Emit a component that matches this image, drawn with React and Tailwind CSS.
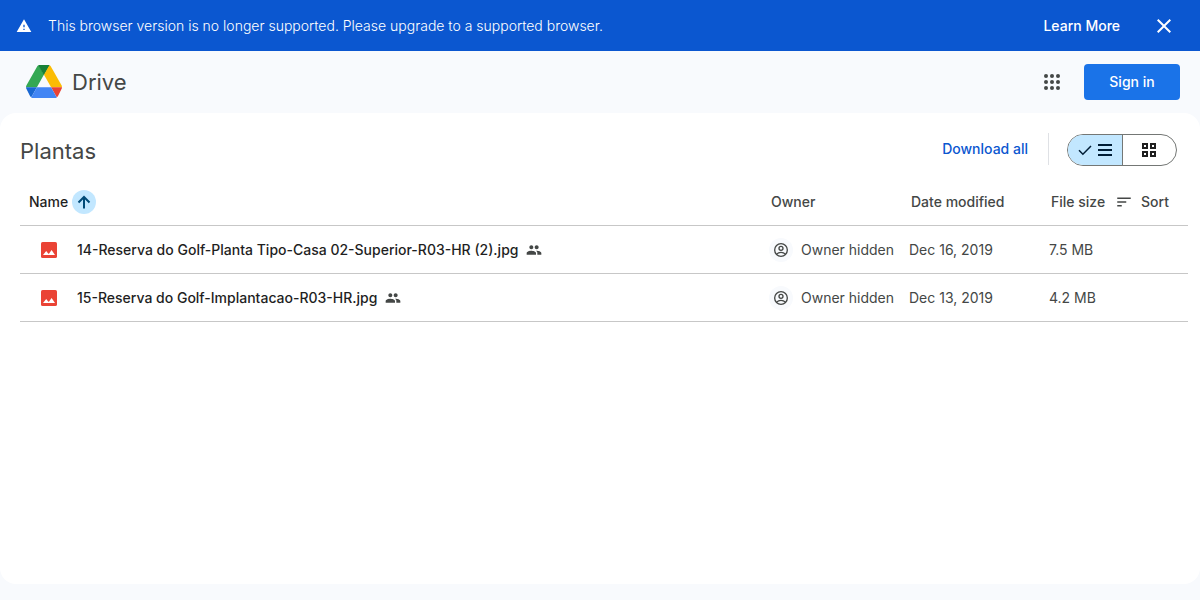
import { useState } from 'react'
import { MdClose, MdGroup, MdSort, MdWarning } from 'react-icons/md'

const files = [
  { id: 1, name: '14-Reserva do Golf-Planta Tipo-Casa 02-Superior-R03-HR (2).jpg', owner: 'Owner hidden', date: 'Dec 16, 2019', size: '7.5 MB' },
  { id: 2, name: '15-Reserva do Golf-Implantacao-R03-HR.jpg', owner: 'Owner hidden', date: 'Dec 13, 2019', size: '4.2 MB' },
]

const DriveLogo = () => (
  <svg viewBox="0 0 36 34" className="w-9 h-[34px]" aria-hidden="true">
    <path fill="#34a853" d="M12.6.2 18 9.6l-7.1 12.6H0c0-.7.2-1.3.5-1.9L11 1.7c.4-.7.9-1.2 1.6-1.5z" />
    <path fill="#188038" d="M12.3.4c.5-.3 1.1-.4 1.700-.4h8c.6 0 1.200.1 1.700.4L18 10.200z" />
    <path fill="#fbbc04" d="M23.400.2c.7.300 1.200.8 1.600 1.500l10.500 18.600c.3.600.5 1.200.5 1.900H25.100L18 9.800z" />
    <path fill="#1967d2" d="M0 22.200h10.900L5.300 32.300c-.6-.3-1-.7-1.300-1.300L.5 24.100c-.3-.6-.5-1.200-.5-1.900z" />
    <path fill="#ea4335" d="M36 22.200H25.100l5.600 10.100c.6-.3 1-.7 1.300-1.300l3.500-6.900c.3-.6.5-1.200.5-1.900z" />
    <path fill="#4285f4" d="M10.900 22.200h14.200l5.700 10.200c-.5.400-1.100.6-1.800.6H7c-.7 0-1.300-.2-1.800-.6z" />
  </svg>
)

const AppsIcon = () => (
  <svg viewBox="0 0 24 24" className="w-6 h-6" fill="currentColor" aria-hidden="true">
    {[6, 12, 18].map((y) => [6, 12, 18].map((x) => <circle key={`${x}-${y}`} cx={x} cy={y} r="2" />))}
  </svg>
)

const ArrowUpIcon = () => (
  <svg viewBox="0 0 14 14" className="w-3.5 h-3.5" fill="none" stroke="currentColor" strokeWidth="2" aria-hidden="true">
    <path d="M7 13.500V2M1.500 7.500 7 2l5.500 5.500" />
  </svg>
)

const ImageIcon = () => (
  <svg viewBox="0 0 16 16" className="w-4 h-4 shrink-0" aria-hidden="true">
    <rect width="16" height="16" rx="1.6" fill="#ea4335" />
    <path fill="#fff" d="M2 13 5.200 9l1.600 2L7.800 12 8.300 11.200 10.600 8 14 13z" />
  </svg>
)

const OwnerIcon = () => (
  <svg viewBox="0 0 24 24" className="w-4 h-4" fill="none" stroke="#444746" strokeWidth="2" aria-hidden="true">
    <circle cx="12" cy="12" r="9.5" />
    <circle cx="12" cy="9.5" r="3" />
    <path d="M5.4 18.2c1.8-1.8 4-2.7 6.6-2.7s4.8.9 6.6 2.7" />
  </svg>
)

const CheckIcon = () => (
  <svg viewBox="0 0 14 12" className="w-3.5 h-3" fill="none" stroke="currentColor" strokeWidth="1.5" aria-hidden="true">
    <path d="M1 6.200 4.900 10.200 13 2" />
  </svg>
)

const ListIcon = () => (
  <svg viewBox="0 0 14 12" className="w-3.5 h-3" fill="currentColor" aria-hidden="true">
    <path d="M0 0h14v2H0zM0 5h14v2H0zM0 10h14v2H0z" />
  </svg>
)

const GridIcon = () => (
  <svg viewBox="0 0 14 14" className="w-3.5 h-3.5" fill="none" stroke="currentColor" strokeWidth="2" aria-hidden="true">
    <path d="M1 1h4v4H1zM9 1h4v4H9zM1 9h4v4H1zM9 9h4v4H9z" />
  </svg>
)

const Banner = ({ onClose }) => (
  <div className="flex items-center bg-[#0b57d0] text-white h-[51px] pl-4 pr-6 text-sm">
    <MdWarning className="w-4 h-4 shrink-0" />
    <p className="ml-4 flex-1 font-light">This browser version is no longer supported. Please upgrade to a supported browser.</p>
    <a href="#learn-more" className="font-medium">Learn More</a>
    <button type="button" aria-label="Close" className="ml-8" onClick={onClose}>
      <MdClose className="w-6 h-6" />
    </button>
  </div>
)

const Header = () => (
  <header className="flex items-center h-[62px] pl-[26px] pr-5">
    <a href="#drive" className="flex items-center gap-2.5">
      <DriveLogo />
      <span className="text-[22px] text-[#444746]">Drive</span>
    </a>
    <div className="ml-auto flex items-center gap-5">
      <button type="button" aria-label="Google apps" className="text-[#444746]">
        <AppsIcon />
      </button>
      <a href="#sign-in" className="flex items-center justify-center w-24 h-9 rounded bg-[#1a73e8] text-white text-sm font-medium">
        Sign in
      </a>
    </div>
  </header>
)

const App = () => {
  const [showBanner, setShowBanner] = useState(true)
  const [view, setView] = useState('list')

  return (
    <div className="min-h-screen flex flex-col bg-[#f8fafd] pb-4 font-['Google_Sans',Inter,sans-serif] text-[#1f1f1f]">
      {showBanner && <Banner onClose={() => setShowBanner(false)} />}
      <Header />

      <main className="flex-1 bg-white rounded-2xl pl-5 pr-3 pt-[18px]">
        {/* Folder title and actions */}
        <div className="flex items-start pr-[11px]">
          <h1 className="text-[22px] leading-10 text-[#444746]">Plantas</h1>
          <button type="button" className="ml-auto h-9 text-sm font-medium text-[#0b57d0]">Download all</button>
          <div className="mt-0.5 ml-5 mr-[18px] w-px h-8 bg-[#dfe1e5]" />
          <div className="mt-[3px] flex h-8 w-[110px] rounded-full border border-[#747775] overflow-hidden">
            <button
              type="button"
              aria-label="List layout"
              aria-pressed={view === 'list'}
              onClick={() => setView('list')}
              className="flex-1 flex items-center justify-center gap-1.5 bg-[#c2e7ff] text-[#001d35] border-r border-[#747775]"
            >
              <CheckIcon />
              <ListIcon />
            </button>
            <button
              type="button"
              aria-label="Grid layout"
              aria-pressed={view === 'grid'}
              onClick={() => setView('grid')}
              className="flex-1 flex items-center justify-center"
            >
              <GridIcon />
            </button>
          </div>
        </div>

        {/* File list */}
        <table className="w-full table-fixed text-sm text-left text-[#444746] mt-1.5">
          <thead>
            <tr className="h-12 border-b border-[#c7c7c7]">
              <th className="pl-[9px] pt-0.5 font-medium text-[#1f1f1f]">
                <button type="button" className="flex items-center gap-1">
                  Name
                  <span className="flex items-center justify-center w-6 h-6 rounded-full bg-[#c2e7ff] text-[#004a77]">
                    <ArrowUpIcon />
                  </span>
                </button>
              </th>
              <th className="w-[140px] pl-0.5 pt-0.5 font-medium">Owner</th>
              <th className="w-[140px] pl-0.5 pt-0.5 font-medium">Date modified</th>
              <th className="w-[139px] pl-0.5 pt-0.5 font-medium">
                <div className="flex items-center justify-between pr-[19px]">
                  <span>File size</span>
                  <button type="button" className="flex items-center gap-2">
                    <MdSort className="w-[18px] h-[18px]" />
                    Sort
                  </button>
                </div>
              </th>
            </tr>
          </thead>
          <tbody>
            {files.map((file) => (
              <tr key={file.id} className="h-12 border-b border-[#c7c7c7]">
                <td className="pl-[21px] pt-0.5">
                  <div className="flex items-center">
                    <ImageIcon />
                    <span className="ml-5 font-medium text-[#1f1f1f]">{file.name}</span>
                    <MdGroup className="ml-2 w-4 h-4" />
                  </div>
                </td>
                <td className="pt-0.5">
                  <div className="flex items-center gap-2">
                    <span className="flex items-center justify-center w-6 h-6 rounded-full bg-[#f8fafd]">
                      <OwnerIcon />
                    </span>
                    {file.owner}
                  </div>
                </td>
                <td className="pt-0.5">{file.date}</td>
                <td className="pt-0.5">{file.size}</td>
              </tr>
            ))}
          </tbody>
        </table>
      </main>
    </div>
  )
}

export default App
